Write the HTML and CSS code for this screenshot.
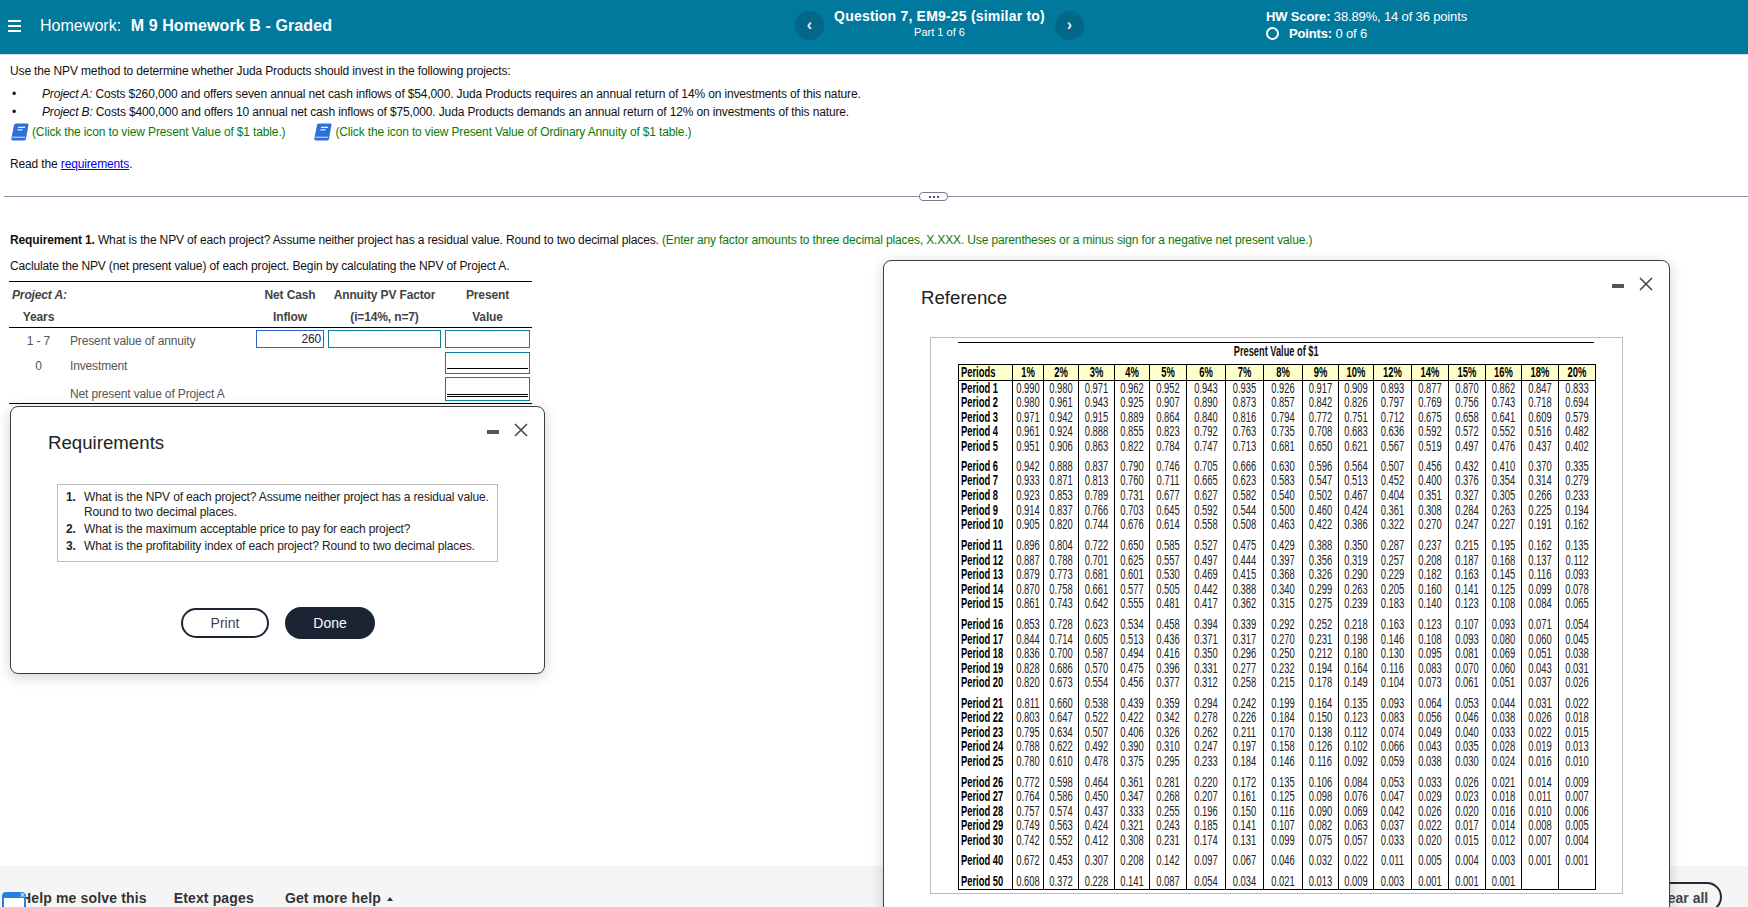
FILE: index.html
```html
<!DOCTYPE html>
<html lang="en">
<head>
<meta charset="utf-8">
<title>Homework: M 9 Homework B - Graded</title>
<link rel="stylesheet" href="styles.css">
</head>
<body>
<div class="page">
<header class="topbar">
  <div class="hw-title">
    <span class="burger"><i></i><i></i><i></i></span>
    <span class="hw-name">Homework: <b>M 9 Homework B - Graded</b></span>
  </div>
  <div class="q-nav">
    <span class="round-btn">&#8249;</span>
    <div class="q-label"><b>Question 7, EM9-25 (similar to)</b><small>Part 1 of 6</small></div>
    <span class="round-btn">&#8250;</span>
  </div>
  <div class="score">
    <div><b>HW Score:</b> 38.89%, 14 of 36 points</div>
    <div class="pts"><span class="ring"></span><span><b>Points:</b> 0 of 6</span></div>
  </div>
</header>
<main class="content">
  <p class="intro">Use the NPV method to determine whether Juda Products should invest in the following projects:</p>
  <ul class="projects">
    <li><em>Project A:</em> Costs $260,000 and offers seven annual net cash inflows of $54,000. Juda Products requires an annual return of 14% on investments of this nature.</li>
    <li><em>Project B:</em> Costs $400,000 and offers 10 annual net cash inflows of $75,000. Juda Products demands an annual return of 12% on investments of this nature.</li>
  </ul>
  <div class="table-links">
    <span class="t-link"><svg class="book" viewBox="0 0 18 18"><path d="M5 .5h11.500a1 1 0 0 1 1 1.200L15 15.800a1.800 1.800 0 0 1-1.800 1.700H2a1.700 1.700 0 0 1-1.700-2L3 2.200A2 2 0 0 1 5 .5z" fill="#2f6fd6"/><path d="M1.300 14.300h12.800" stroke="#a9c8f2" stroke-width="1.300"/><path d="M7 4.300h7M6.500 6.800h5" stroke="#e8f1fd" stroke-width="1.300"/></svg>(Click the icon to view Present Value of $1 table.)</span>
    <span class="t-link"><svg class="book" viewBox="0 0 18 18"><path d="M5 .5h11.500a1 1 0 0 1 1 1.200L15 15.800a1.800 1.800 0 0 1-1.800 1.700H2a1.700 1.700 0 0 1-1.700-2L3 2.200A2 2 0 0 1 5 .5z" fill="#2f6fd6"/><path d="M1.300 14.300h12.800" stroke="#a9c8f2" stroke-width="1.300"/><path d="M7 4.300h7M6.500 6.800h5" stroke="#e8f1fd" stroke-width="1.300"/></svg>(Click the icon to view Present Value of Ordinary Annuity of $1 table.)</span>
  </div>
  <p class="read">Read the <a href="#req">requirements</a>.</p>
  <div class="divider"><span class="handle"><i></i><i></i><i></i></span></div>
  <p class="req-line"><b>Requirement 1.</b> What is the NPV of each project? Assume neither project has a residual value. Round to two decimal places. <span class="green">(Enter any factor amounts to three decimal places, X.XXX. Use parentheses or a minus sign for a negative net present value.)</span></p>
  <p class="calc-line">Caclulate the NPV (net present value) of each project. Begin by calculating the NPV of Project A.</p>
  <table class="npv">
    <colgroup><col><col><col><col><col></colgroup>
    <thead>
      <tr class="h1"><th colspan="2" class="proj">Project A:</th><th>Net Cash</th><th>Annuity PV Factor</th><th>Present</th></tr>
      <tr class="h2"><th>Years</th><th></th><th>Inflow</th><th>(i=14%, n=7)</th><th>Value</th></tr>
    </thead>
    <tbody>
      <tr class="a"><td class="yr">1 - 7</td><td>Present value of annuity</td><td><div class="field f-active">260</div></td><td><div class="field"></div></td><td><div class="field"></div></td></tr>
      <tr class="b"><td class="yr">0</td><td>Investment</td><td></td><td></td><td><div class="field tall"><span class="rule"></span></div></td></tr>
      <tr class="c"><td></td><td>Net present value of Project A</td><td></td><td></td><td><div class="field taller"><span class="rule dbl"></span></div></td></tr>
    </tbody>
  </table>
</main>
<footer class="bottombar">
  <span class="help-icon"><i>&#215;</i></span>
  <nav class="tools">
    <span class="tool first">Help me solve this</span>
    <span class="tool">Etext pages</span>
    <span class="tool">Get more help <i class="caret"></i></span>
  </nav>
  <span class="clear">Clear all</span>
</footer>

<section class="modal req-modal" id="req">
  <div class="win-ctl"><span class="min"></span><svg class="x" viewBox="0 0 14 14"><path d="M1 1l12 12M13 1L1 13"/></svg></div>
  <h2>Requirements</h2>
  <ol class="req-box">
    <li>What is the NPV of each project? Assume neither project has a residual value. Round to two decimal places.</li>
    <li>What is the maximum acceptable price to pay for each project?</li>
    <li>What is the profitability index of each project? Round to two decimal places.</li>
  </ol>
  <div class="actions"><button class="btn-print">Print</button><button class="btn-done">Done</button></div>
</section>

<section class="modal ref-modal">
  <div class="win-ctl"><span class="min"></span><svg class="x" viewBox="0 0 14 14"><path d="M1 1l12 12M13 1L1 13"/></svg></div>
  <h2>Reference</h2>
  <div class="ref-box">
    <div class="pv-title"><span>Present Value of $1</span></div>
    <table class="pv">
      <colgroup><col><col><col><col><col><col><col><col><col><col><col><col><col><col><col><col><col></colgroup>
      <thead><tr><th class="lab"><span>Periods</span></th><th><span>1%</span></th><th><span>2%</span></th><th><span>3%</span></th><th><span>4%</span></th><th><span>5%</span></th><th><span>6%</span></th><th><span>7%</span></th><th><span>8%</span></th><th><span>9%</span></th><th><span>10%</span></th><th><span>12%</span></th><th><span>14%</span></th><th><span>15%</span></th><th><span>16%</span></th><th><span>18%</span></th><th><span>20%</span></th></tr></thead>
      <tbody>
<tr class="r14"><th class="lab"><span>Period 1</span></th><td><span>0.990</span></td><td><span>0.980</span></td><td><span>0.971</span></td><td><span>0.962</span></td><td><span>0.952</span></td><td><span>0.943</span></td><td><span>0.935</span></td><td><span>0.926</span></td><td><span>0.917</span></td><td><span>0.909</span></td><td><span>0.893</span></td><td><span>0.877</span></td><td><span>0.870</span></td><td><span>0.862</span></td><td><span>0.847</span></td><td><span>0.833</span></td></tr>
<tr class="r15"><th class="lab"><span>Period 2</span></th><td><span>0.980</span></td><td><span>0.961</span></td><td><span>0.943</span></td><td><span>0.925</span></td><td><span>0.907</span></td><td><span>0.890</span></td><td><span>0.873</span></td><td><span>0.857</span></td><td><span>0.842</span></td><td><span>0.826</span></td><td><span>0.797</span></td><td><span>0.769</span></td><td><span>0.756</span></td><td><span>0.743</span></td><td><span>0.718</span></td><td><span>0.694</span></td></tr>
<tr class="r14"><th class="lab"><span>Period 3</span></th><td><span>0.971</span></td><td><span>0.942</span></td><td><span>0.915</span></td><td><span>0.889</span></td><td><span>0.864</span></td><td><span>0.840</span></td><td><span>0.816</span></td><td><span>0.794</span></td><td><span>0.772</span></td><td><span>0.751</span></td><td><span>0.712</span></td><td><span>0.675</span></td><td><span>0.658</span></td><td><span>0.641</span></td><td><span>0.609</span></td><td><span>0.579</span></td></tr>
<tr class="r15"><th class="lab"><span>Period 4</span></th><td><span>0.961</span></td><td><span>0.924</span></td><td><span>0.888</span></td><td><span>0.855</span></td><td><span>0.823</span></td><td><span>0.792</span></td><td><span>0.763</span></td><td><span>0.735</span></td><td><span>0.708</span></td><td><span>0.683</span></td><td><span>0.636</span></td><td><span>0.592</span></td><td><span>0.572</span></td><td><span>0.552</span></td><td><span>0.516</span></td><td><span>0.482</span></td></tr>
<tr class="r20"><th class="lab"><span>Period 5</span></th><td><span>0.951</span></td><td><span>0.906</span></td><td><span>0.863</span></td><td><span>0.822</span></td><td><span>0.784</span></td><td><span>0.747</span></td><td><span>0.713</span></td><td><span>0.681</span></td><td><span>0.650</span></td><td><span>0.621</span></td><td><span>0.567</span></td><td><span>0.519</span></td><td><span>0.497</span></td><td><span>0.476</span></td><td><span>0.437</span></td><td><span>0.402</span></td></tr>
<tr class="r14"><th class="lab"><span>Period 6</span></th><td><span>0.942</span></td><td><span>0.888</span></td><td><span>0.837</span></td><td><span>0.790</span></td><td><span>0.746</span></td><td><span>0.705</span></td><td><span>0.666</span></td><td><span>0.630</span></td><td><span>0.596</span></td><td><span>0.564</span></td><td><span>0.507</span></td><td><span>0.456</span></td><td><span>0.432</span></td><td><span>0.410</span></td><td><span>0.370</span></td><td><span>0.335</span></td></tr>
<tr class="r15"><th class="lab"><span>Period 7</span></th><td><span>0.933</span></td><td><span>0.871</span></td><td><span>0.813</span></td><td><span>0.760</span></td><td><span>0.711</span></td><td><span>0.665</span></td><td><span>0.623</span></td><td><span>0.583</span></td><td><span>0.547</span></td><td><span>0.513</span></td><td><span>0.452</span></td><td><span>0.400</span></td><td><span>0.376</span></td><td><span>0.354</span></td><td><span>0.314</span></td><td><span>0.279</span></td></tr>
<tr class="r15"><th class="lab"><span>Period 8</span></th><td><span>0.923</span></td><td><span>0.853</span></td><td><span>0.789</span></td><td><span>0.731</span></td><td><span>0.677</span></td><td><span>0.627</span></td><td><span>0.582</span></td><td><span>0.540</span></td><td><span>0.502</span></td><td><span>0.467</span></td><td><span>0.404</span></td><td><span>0.351</span></td><td><span>0.327</span></td><td><span>0.305</span></td><td><span>0.266</span></td><td><span>0.233</span></td></tr>
<tr class="r14"><th class="lab"><span>Period 9</span></th><td><span>0.914</span></td><td><span>0.837</span></td><td><span>0.766</span></td><td><span>0.703</span></td><td><span>0.645</span></td><td><span>0.592</span></td><td><span>0.544</span></td><td><span>0.500</span></td><td><span>0.460</span></td><td><span>0.424</span></td><td><span>0.361</span></td><td><span>0.308</span></td><td><span>0.284</span></td><td><span>0.263</span></td><td><span>0.225</span></td><td><span>0.194</span></td></tr>
<tr class="r21"><th class="lab"><span>Period 10</span></th><td><span>0.905</span></td><td><span>0.820</span></td><td><span>0.744</span></td><td><span>0.676</span></td><td><span>0.614</span></td><td><span>0.558</span></td><td><span>0.508</span></td><td><span>0.463</span></td><td><span>0.422</span></td><td><span>0.386</span></td><td><span>0.322</span></td><td><span>0.270</span></td><td><span>0.247</span></td><td><span>0.227</span></td><td><span>0.191</span></td><td><span>0.162</span></td></tr>
<tr class="r15"><th class="lab"><span>Period 11</span></th><td><span>0.896</span></td><td><span>0.804</span></td><td><span>0.722</span></td><td><span>0.650</span></td><td><span>0.585</span></td><td><span>0.527</span></td><td><span>0.475</span></td><td><span>0.429</span></td><td><span>0.388</span></td><td><span>0.350</span></td><td><span>0.287</span></td><td><span>0.237</span></td><td><span>0.215</span></td><td><span>0.195</span></td><td><span>0.162</span></td><td><span>0.135</span></td></tr>
<tr class="r14"><th class="lab"><span>Period 12</span></th><td><span>0.887</span></td><td><span>0.788</span></td><td><span>0.701</span></td><td><span>0.625</span></td><td><span>0.557</span></td><td><span>0.497</span></td><td><span>0.444</span></td><td><span>0.397</span></td><td><span>0.356</span></td><td><span>0.319</span></td><td><span>0.257</span></td><td><span>0.208</span></td><td><span>0.187</span></td><td><span>0.168</span></td><td><span>0.137</span></td><td><span>0.112</span></td></tr>
<tr class="r15"><th class="lab"><span>Period 13</span></th><td><span>0.879</span></td><td><span>0.773</span></td><td><span>0.681</span></td><td><span>0.601</span></td><td><span>0.530</span></td><td><span>0.469</span></td><td><span>0.415</span></td><td><span>0.368</span></td><td><span>0.326</span></td><td><span>0.290</span></td><td><span>0.229</span></td><td><span>0.182</span></td><td><span>0.163</span></td><td><span>0.145</span></td><td><span>0.116</span></td><td><span>0.093</span></td></tr>
<tr class="r14"><th class="lab"><span>Period 14</span></th><td><span>0.870</span></td><td><span>0.758</span></td><td><span>0.661</span></td><td><span>0.577</span></td><td><span>0.505</span></td><td><span>0.442</span></td><td><span>0.388</span></td><td><span>0.340</span></td><td><span>0.299</span></td><td><span>0.263</span></td><td><span>0.205</span></td><td><span>0.160</span></td><td><span>0.141</span></td><td><span>0.125</span></td><td><span>0.099</span></td><td><span>0.078</span></td></tr>
<tr class="r21"><th class="lab"><span>Period 15</span></th><td><span>0.861</span></td><td><span>0.743</span></td><td><span>0.642</span></td><td><span>0.555</span></td><td><span>0.481</span></td><td><span>0.417</span></td><td><span>0.362</span></td><td><span>0.315</span></td><td><span>0.275</span></td><td><span>0.239</span></td><td><span>0.183</span></td><td><span>0.140</span></td><td><span>0.123</span></td><td><span>0.108</span></td><td><span>0.084</span></td><td><span>0.065</span></td></tr>
<tr class="r15"><th class="lab"><span>Period 16</span></th><td><span>0.853</span></td><td><span>0.728</span></td><td><span>0.623</span></td><td><span>0.534</span></td><td><span>0.458</span></td><td><span>0.394</span></td><td><span>0.339</span></td><td><span>0.292</span></td><td><span>0.252</span></td><td><span>0.218</span></td><td><span>0.163</span></td><td><span>0.123</span></td><td><span>0.107</span></td><td><span>0.093</span></td><td><span>0.071</span></td><td><span>0.054</span></td></tr>
<tr class="r14"><th class="lab"><span>Period 17</span></th><td><span>0.844</span></td><td><span>0.714</span></td><td><span>0.605</span></td><td><span>0.513</span></td><td><span>0.436</span></td><td><span>0.371</span></td><td><span>0.317</span></td><td><span>0.270</span></td><td><span>0.231</span></td><td><span>0.198</span></td><td><span>0.146</span></td><td><span>0.108</span></td><td><span>0.093</span></td><td><span>0.080</span></td><td><span>0.060</span></td><td><span>0.045</span></td></tr>
<tr class="r15"><th class="lab"><span>Period 18</span></th><td><span>0.836</span></td><td><span>0.700</span></td><td><span>0.587</span></td><td><span>0.494</span></td><td><span>0.416</span></td><td><span>0.350</span></td><td><span>0.296</span></td><td><span>0.250</span></td><td><span>0.212</span></td><td><span>0.180</span></td><td><span>0.130</span></td><td><span>0.095</span></td><td><span>0.081</span></td><td><span>0.069</span></td><td><span>0.051</span></td><td><span>0.038</span></td></tr>
<tr class="r14"><th class="lab"><span>Period 19</span></th><td><span>0.828</span></td><td><span>0.686</span></td><td><span>0.570</span></td><td><span>0.475</span></td><td><span>0.396</span></td><td><span>0.331</span></td><td><span>0.277</span></td><td><span>0.232</span></td><td><span>0.194</span></td><td><span>0.164</span></td><td><span>0.116</span></td><td><span>0.083</span></td><td><span>0.070</span></td><td><span>0.060</span></td><td><span>0.043</span></td><td><span>0.031</span></td></tr>
<tr class="r21"><th class="lab"><span>Period 20</span></th><td><span>0.820</span></td><td><span>0.673</span></td><td><span>0.554</span></td><td><span>0.456</span></td><td><span>0.377</span></td><td><span>0.312</span></td><td><span>0.258</span></td><td><span>0.215</span></td><td><span>0.178</span></td><td><span>0.149</span></td><td><span>0.104</span></td><td><span>0.073</span></td><td><span>0.061</span></td><td><span>0.051</span></td><td><span>0.037</span></td><td><span>0.026</span></td></tr>
<tr class="r14"><th class="lab"><span>Period 21</span></th><td><span>0.811</span></td><td><span>0.660</span></td><td><span>0.538</span></td><td><span>0.439</span></td><td><span>0.359</span></td><td><span>0.294</span></td><td><span>0.242</span></td><td><span>0.199</span></td><td><span>0.164</span></td><td><span>0.135</span></td><td><span>0.093</span></td><td><span>0.064</span></td><td><span>0.053</span></td><td><span>0.044</span></td><td><span>0.031</span></td><td><span>0.022</span></td></tr>
<tr class="r15"><th class="lab"><span>Period 22</span></th><td><span>0.803</span></td><td><span>0.647</span></td><td><span>0.522</span></td><td><span>0.422</span></td><td><span>0.342</span></td><td><span>0.278</span></td><td><span>0.226</span></td><td><span>0.184</span></td><td><span>0.150</span></td><td><span>0.123</span></td><td><span>0.083</span></td><td><span>0.056</span></td><td><span>0.046</span></td><td><span>0.038</span></td><td><span>0.026</span></td><td><span>0.018</span></td></tr>
<tr class="r14"><th class="lab"><span>Period 23</span></th><td><span>0.795</span></td><td><span>0.634</span></td><td><span>0.507</span></td><td><span>0.406</span></td><td><span>0.326</span></td><td><span>0.262</span></td><td><span>0.211</span></td><td><span>0.170</span></td><td><span>0.138</span></td><td><span>0.112</span></td><td><span>0.074</span></td><td><span>0.049</span></td><td><span>0.040</span></td><td><span>0.033</span></td><td><span>0.022</span></td><td><span>0.015</span></td></tr>
<tr class="r15"><th class="lab"><span>Period 24</span></th><td><span>0.788</span></td><td><span>0.622</span></td><td><span>0.492</span></td><td><span>0.390</span></td><td><span>0.310</span></td><td><span>0.247</span></td><td><span>0.197</span></td><td><span>0.158</span></td><td><span>0.126</span></td><td><span>0.102</span></td><td><span>0.066</span></td><td><span>0.043</span></td><td><span>0.035</span></td><td><span>0.028</span></td><td><span>0.019</span></td><td><span>0.013</span></td></tr>
<tr class="r21"><th class="lab"><span>Period 25</span></th><td><span>0.780</span></td><td><span>0.610</span></td><td><span>0.478</span></td><td><span>0.375</span></td><td><span>0.295</span></td><td><span>0.233</span></td><td><span>0.184</span></td><td><span>0.146</span></td><td><span>0.116</span></td><td><span>0.092</span></td><td><span>0.059</span></td><td><span>0.038</span></td><td><span>0.030</span></td><td><span>0.024</span></td><td><span>0.016</span></td><td><span>0.010</span></td></tr>
<tr class="r14"><th class="lab"><span>Period 26</span></th><td><span>0.772</span></td><td><span>0.598</span></td><td><span>0.464</span></td><td><span>0.361</span></td><td><span>0.281</span></td><td><span>0.220</span></td><td><span>0.172</span></td><td><span>0.135</span></td><td><span>0.106</span></td><td><span>0.084</span></td><td><span>0.053</span></td><td><span>0.033</span></td><td><span>0.026</span></td><td><span>0.021</span></td><td><span>0.014</span></td><td><span>0.009</span></td></tr>
<tr class="r15"><th class="lab"><span>Period 27</span></th><td><span>0.764</span></td><td><span>0.586</span></td><td><span>0.450</span></td><td><span>0.347</span></td><td><span>0.268</span></td><td><span>0.207</span></td><td><span>0.161</span></td><td><span>0.125</span></td><td><span>0.098</span></td><td><span>0.076</span></td><td><span>0.047</span></td><td><span>0.029</span></td><td><span>0.023</span></td><td><span>0.018</span></td><td><span>0.011</span></td><td><span>0.007</span></td></tr>
<tr class="r14"><th class="lab"><span>Period 28</span></th><td><span>0.757</span></td><td><span>0.574</span></td><td><span>0.437</span></td><td><span>0.333</span></td><td><span>0.255</span></td><td><span>0.196</span></td><td><span>0.150</span></td><td><span>0.116</span></td><td><span>0.090</span></td><td><span>0.069</span></td><td><span>0.042</span></td><td><span>0.026</span></td><td><span>0.020</span></td><td><span>0.016</span></td><td><span>0.010</span></td><td><span>0.006</span></td></tr>
<tr class="r15"><th class="lab"><span>Period 29</span></th><td><span>0.749</span></td><td><span>0.563</span></td><td><span>0.424</span></td><td><span>0.321</span></td><td><span>0.243</span></td><td><span>0.185</span></td><td><span>0.141</span></td><td><span>0.107</span></td><td><span>0.082</span></td><td><span>0.063</span></td><td><span>0.037</span></td><td><span>0.022</span></td><td><span>0.017</span></td><td><span>0.014</span></td><td><span>0.008</span></td><td><span>0.005</span></td></tr>
<tr class="r20"><th class="lab"><span>Period 30</span></th><td><span>0.742</span></td><td><span>0.552</span></td><td><span>0.412</span></td><td><span>0.308</span></td><td><span>0.231</span></td><td><span>0.174</span></td><td><span>0.131</span></td><td><span>0.099</span></td><td><span>0.075</span></td><td><span>0.057</span></td><td><span>0.033</span></td><td><span>0.020</span></td><td><span>0.015</span></td><td><span>0.012</span></td><td><span>0.007</span></td><td><span>0.004</span></td></tr>
<tr class="r21"><th class="lab"><span>Period 40</span></th><td><span>0.672</span></td><td><span>0.453</span></td><td><span>0.307</span></td><td><span>0.208</span></td><td><span>0.142</span></td><td><span>0.097</span></td><td><span>0.067</span></td><td><span>0.046</span></td><td><span>0.032</span></td><td><span>0.022</span></td><td><span>0.011</span></td><td><span>0.005</span></td><td><span>0.004</span></td><td><span>0.003</span></td><td><span>0.001</span></td><td><span>0.001</span></td></tr>
<tr class="r15"><th class="lab"><span>Period 50</span></th><td><span>0.608</span></td><td><span>0.372</span></td><td><span>0.228</span></td><td><span>0.141</span></td><td><span>0.087</span></td><td><span>0.054</span></td><td><span>0.034</span></td><td><span>0.021</span></td><td><span>0.013</span></td><td><span>0.009</span></td><td><span>0.003</span></td><td><span>0.001</span></td><td><span>0.001</span></td><td><span>0.001</span></td><td></td><td></td></tr>
      </tbody>
    </table>
  </div>
</section>
</div>
</body>
</html>
```
FILE: styles.css
```css
* { box-sizing: border-box; }
html, body { margin: 0; height: 100%; }
body { font: 12px/18px "Liberation Sans", Arial, sans-serif; color: #111; background: #fff; overflow: hidden; }
p { margin: 0; }
.page { position: relative; width: 1748px; height: 907px; overflow: hidden; display: flex; flex-direction: column; }

/* top bar */
.topbar { flex: none; height: 55px; background: #01799c; border-bottom: 1px solid #cfdde3; color: #fff; display: grid; grid-template-columns: 795px 471px 1fr; align-items: start; }
.hw-title { display: flex; align-items: center; height: 52px; padding-left: 8px; }
.burger { display: flex; flex-direction: column; gap: 3px; width: 13px; margin-right: 19px; }
.burger i { display: block; height: 2px; background: #fff; }
.hw-name { font-size: 16px; letter-spacing: .03px; }
.hw-name b { margin-left: 5px; letter-spacing: .1px; }
.q-nav { display: flex; padding-top: 11px; }
.round-btn { flex: none; width: 29px; height: 29px; border-radius: 50%; background: #03678a; color: #e8f2f6; display: flex; align-items: center; justify-content: center; font: 700 16px/1 "Liberation Sans", sans-serif; padding-bottom: 2px; }
.q-label { width: 231px; text-align: center; display: flex; flex-direction: column; margin-top: -4px; }
.q-label b { font-size: 14px; line-height: 18px; letter-spacing: .2px; }
.q-label small { font-size: 11px; line-height: 15px; }
.score { font-size: 13px; line-height: 17px; padding-top: 8px; letter-spacing: -.15px; }
.score .pts { display: flex; align-items: center; gap: 10px; }
.ring { width: 13px; height: 13px; border: 2px solid #fff; border-radius: 50%; }

/* question */
.content { flex: 1; padding-top: 7px; position: relative; min-height: 0; letter-spacing: -.14px; }
.intro { padding-left: 10px; }
.projects { list-style: none; margin: 5px 0 0; padding: 0 0 0 42px; }
.projects li { position: relative; }
.projects li::before { content: "\2022"; position: absolute; left: -30px; }
.table-links { display: flex; margin-top: 2px; padding-left: 10px; color: #0b7a0b; }
.t-link { display: flex; align-items: center; gap: 2px; margin-right: 28px; height: 18px; }
.book { width: 20px; height: 18px; flex: none; }
.read { margin-top: 14px; padding-left: 10px; }
.read a { color: #0000ee; }
.divider { position: relative; height: 1px; margin: 23px 0 0 4px; background: #8b90a6; }
.handle { position: absolute; left: 915px; top: -4px; width: 29px; height: 9px; border: 1px solid #777c8e; border-radius: 4px; background: #fff; display: flex; align-items: center; justify-content: center; gap: 2px; }
.handle i { width: 2px; height: 2px; background: #556; }
.req-line { margin-top: 34px; padding-left: 10px; }
.green { color: #0b7a0b; }
.calc-line { margin-top: 8px; padding-left: 10px; }

.npv { margin: 6px 0 0 9px; width: 523px; table-layout: fixed; border-collapse: separate; border-spacing: 0; border-top: 1px solid #000; border-bottom: 1px solid #000; color: #555; }
.npv col:nth-child(1) { width: 59px; }
.npv col:nth-child(2) { width: 186px; }
.npv col:nth-child(3) { width: 72px; }
.npv col:nth-child(4) { width: 117px; }
.npv col:nth-child(5) { width: 89px; }
.npv th, .npv td { padding: 0; font-size: 12px; line-height: 16px; }
.npv th { color: #444; text-align: center; }
.npv .proj { text-align: left; font-style: italic; padding-left: 3px; }
.npv .h1 th { height: 24px; vertical-align: top; padding-top: 5px; }
.npv .h2 th { height: 22px; border-bottom: 1px solid #000; vertical-align: top; padding-top: 3px; }
.npv .yr { text-align: center; }
.npv tbody td:nth-child(2) { padding-left: 2px; }
.npv td { vertical-align: top; }
.npv .a td { height: 22px; padding-top: 5px; }
.npv .b td { height: 25px; padding-top: 8px; }
.npv .c td { height: 28px; padding-top: 11px; }
.npv tbody td:nth-child(n+3) { padding-top: 2px; }
.npv td:nth-child(3) .field { margin: 0 2px; }
.npv td:nth-child(4) .field { margin: 0 2px; }
.npv td:nth-child(5) .field { margin: 0 2px; }
.field { height: 18px; border: 1px solid #0e7f9f; color: #222; text-align: right; padding-right: 2px; font-size: 12px; line-height: 16px; display: flex; flex-direction: column; justify-content: flex-end; }
.f-active { border-color: #2f62c9; display: block; }
.field.tall { height: 22px; padding: 0 1px 4px; }
.field.taller { height: 24px; padding: 0 1px 3px; }
.rule { display: block; border-bottom: 1px solid #000; }
.rule.dbl { border-bottom: 3px double #000; }

/* bottom bar */
.bottombar { flex: none; height: 41px; background: #f5f5f5; position: relative; display: flex; align-items: flex-end; font-weight: 700; font-size: 14px; color: #333; }
.tools { display: flex; letter-spacing: .15px; line-height: 18px; }
.tool { margin-right: 31px; }
.tool.first { margin-left: 21px; margin-right: 27px; }
.caret { display: inline-block; border: 3px solid transparent; border-bottom: 4px solid #333; border-top: 0; margin: 0 0 2px 2px; }
.help-icon { position: absolute; left: 2px; top: 26px; width: 24px; height: 20px; border: 2px solid #2a7de1; border-top-width: 6px; border-radius: 4px 4px 0 0; background: #fff; }
.help-icon i { position: absolute; right: -1px; top: -7px; font: 700 9px/9px "Liberation Sans", sans-serif; color: #cfe2fb; }
.clear { position: absolute; left: 1640px; top: 16px; width: 82px; height: 30px; border: 2px solid #222a3a; border-radius: 15px; text-align: center; line-height: 28px; color: #444; }

/* modals */
.modal { position: absolute; background: #fff; border: 1px solid #3a3f4a; border-radius: 8px; box-shadow: 0 3px 14px rgba(0,0,0,.18); }
.modal h2 { margin: 0; font-weight: 400; font-size: 18.670px; line-height: 24px; color: #222; }
.win-ctl { position: absolute; display: flex; align-items: center; }
.min { width: 12px; height: 4px; background: #555; margin-top: 4px; }
.x { fill: none; stroke: #444; stroke-width: 1.500; width: 14px; height: 14px; }
.req-modal { left: 10px; top: 406px; width: 535px; height: 268px; padding: 24px 0 0 37px; }
.req-modal .win-ctl { right: 16px; top: 16px; gap: 15px; }
.req-box { margin: 29px 0 0 9px; width: 441px; height: 78px; border: 1px solid #bbb; padding: 5px 0 0 26px; color: #222; line-height: 15px; letter-spacing: -.14px; list-style: none; counter-reset: item; }
.req-box li { margin-bottom: 2px; position: relative; counter-increment: item; }
.req-box li::before { content: counter(item) "."; position: absolute; left: -18px; font-weight: 700; }
.actions { display: flex; align-items: center; margin: 45px 0 0 133px; gap: 16px; }
.actions button { font: 14px/1 "Liberation Sans", sans-serif; border-radius: 16px; padding: 0; }
.btn-print { width: 88px; height: 30px; background: #fff; border: 2px solid #1e2433; color: #444; }
.btn-done { width: 90px; height: 32px; background: #1c2333; border: 0; color: #fff; }

.ref-modal { left: 883px; top: 260px; width: 787px; height: 720px; padding: 25px 0 0 37px; }
.ref-modal .win-ctl { right: 16px; top: 16px; gap: 15px; }
.ref-box { margin: 27px 0 0 9px; width: 693px; height: 557px; border: 1px solid #bbb; padding: 4px 0 0 27px; }
.pv-title { width: 636px; border-top: 1px solid #000; height: 22px; text-align: center; font: 700 14px/14px "Liberation Sans", sans-serif; padding-top: 1px; }
.pv-title span { display: inline-block; transform: scaleX(.66); white-space: nowrap; }
.pv { width: 637px; table-layout: fixed; border-collapse: separate; border-spacing: 0; border: 1px solid #000; font: 14px/14px "Liberation Sans", sans-serif; }
.pv col { width: 37px; }
.pv col:nth-child(1) { width: 53px; }
.pv col:nth-child(2) { width: 31px; }
.pv col:nth-child(3) { width: 35px; }
.pv col:nth-child(4) { width: 36px; }
.pv col:nth-child(5) { width: 35px; }
.pv col:nth-child(7) { width: 39px; }
.pv col:nth-child(8) { width: 38px; }
.pv col:nth-child(9) { width: 39px; }
.pv col:nth-child(10) { width: 36px; }
.pv col:nth-child(11) { width: 35px; }
.pv col:nth-child(12) { width: 38px; }
.pv col:nth-child(15) { width: 36px; }
.pv th, .pv td { padding: 0; vertical-align: top; overflow: hidden; border-left: 1px solid #000; }
.pv tr > :first-child { border-left: 0; }
.pv thead th { height: 16px; background: #ffffcc; border-bottom: 1px solid #000; line-height: 15px; }
.pv td span, .pv th span { display: block; margin: 0 -20px; text-align: center; transform: scaleX(.67); color: #222; white-space: nowrap; }
.pv .lab { text-align: left; }
.pv .lab span { margin: 0 0 0 2px; width: 80px; text-align: left; transform-origin: 0 50%; color: #000; }
.pv thead th span { color: #000; }
.r14 > * { height: 14px; }
.r15 > * { height: 15px; }
.r20 > * { height: 20px; }
.r21 > * { height: 21px; }
```
